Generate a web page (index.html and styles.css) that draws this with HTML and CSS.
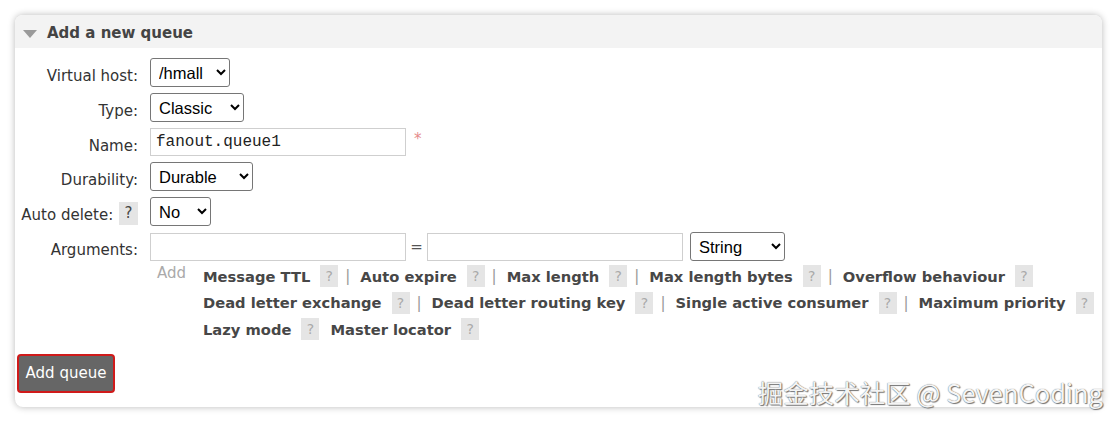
FILE: index.html
```html
<!DOCTYPE html>
<html lang="en">
<head>
    <meta charset="UTF-8">
    <meta name="viewport" content="width=device-width, initial-scale=1.0">
    <title>Add a new queue</title>
    <link rel="stylesheet" href="styles.css">
</head>
<body>
    <div class="section">
        <div class="section-head">
            <span class="arrow"></span>
            <h2>Add a new queue</h2>
        </div>
        <form class="queue-form" onsubmit="return false">
            <div class="form-grid">
                <label class="lbl">Virtual host:</label>
                <div class="ctl">
                    <select class="sel sel-vhost"><option>/hmall</option></select>
                </div>

                <label class="lbl">Type:</label>
                <div class="ctl">
                    <select class="sel sel-type"><option>Classic</option><option>Quorum</option></select>
                </div>

                <label class="lbl">Name:</label>
                <div class="ctl">
                    <input type="text" class="txt mono" value="fanout.queue1">
                    <span class="req">*</span>
                </div>

                <label class="lbl">Durability:</label>
                <div class="ctl">
                    <select class="sel sel-dur"><option>Durable</option><option>Transient</option></select>
                </div>

                <label class="lbl">Auto delete: <span class="help dark">?</span></label>
                <div class="ctl">
                    <select class="sel sel-auto"><option>No</option><option>Yes</option></select>
                </div>

                <label class="lbl">Arguments:</label>
                <div class="ctl args">
                    <div class="args-row">
                        <input type="text" class="txt">
                        <span class="eq">=</span>
                        <input type="text" class="txt">
                        <select class="sel sel-str"><option>String</option><option>Number</option><option>List</option></select>
                    </div>
                    <div class="add-row">
                        <span class="add">Add</span>
                        <div class="opts">
                            <div class="opt-line">
                                <span class="opt">Message TTL</span><span class="help">?</span><span class="sep">|</span>
                                <span class="opt">Auto expire</span><span class="help">?</span><span class="sep">|</span>
                                <span class="opt">Max length</span><span class="help">?</span><span class="sep">|</span>
                                <span class="opt">Max length bytes</span><span class="help">?</span><span class="sep">|</span>
                                <span class="opt">Overflow behaviour</span><span class="help">?</span>
                            </div>
                            <div class="opt-line">
                                <span class="opt">Dead letter exchange</span><span class="help">?</span><span class="sep">|</span>
                                <span class="opt">Dead letter routing key</span><span class="help">?</span><span class="sep">|</span>
                                <span class="opt">Single active consumer</span><span class="help">?</span><span class="sep">|</span>
                                <span class="opt">Maximum priority</span><span class="help">?</span>
                            </div>
                            <div class="opt-line">
                                <span class="opt">Lazy mode</span><span class="help gap">?</span>
                                <span class="opt">Master locator</span><span class="help">?</span>
                            </div>
                        </div>
                    </div>
                </div>
            </div>
            <div class="actions">
                <button class="btn" type="submit">Add queue</button>
            </div>
        </form>
    </div>
    <div class="watermark">掘金技术社区 @ SevenCoding</div>
</body>
</html>
```

FILE: styles.css
```css
*{
    margin: 0;
    padding: 0;
    box-sizing: border-box;
}
body{
    background: #fff;
    font-family: "DejaVu Sans", Verdana, sans-serif;
    font-size: 15px;
    color: #333;
    padding: 15px;
    position: relative;
    height: 424px;
    overflow: hidden;
}
.section{
    background: #fff;
    border-radius: 8px;
    box-shadow: 0 0 7px rgba(0, 0, 0, 0.28);
    height: 392px;
    overflow: hidden;
}
.section-head{
    height: 33px;
    background: #f3f3f3;
    display: flex;
    align-items: center;
    padding-left: 8px;
    padding-top: 3px;
}
.arrow{
    width: 0;
    height: 0;
    border-left: 7px solid transparent;
    border-right: 7px solid transparent;
    border-top: 8px solid #9a9a9a;
    margin-right: 10px;
    margin-top: 1px;
}
.section-head h2{
    font-size: 15px;
    font-weight: bold;
    color: #444;
}
.queue-form{
    padding-top: 10px;
}
.form-grid{
    display: grid;
    grid-template-columns: 135px 1fr;
    row-gap: 6px;
}
.lbl{
    text-align: right;
    padding-right: 12px;
    padding-top: 9px;
    color: #333;
    white-space: nowrap;
}
.ctl{
    display: flex;
    align-items: flex-start;
}
.sel{
    font-family: "Liberation Sans", Arial, sans-serif;
    font-size: 16.5px;
    color: #000;
    height: 29px;
    border: 1px solid #767676;
    border-radius: 3px;
    background: #fff;
    padding: 0 4px;
}
.sel-vhost{ width: 80px; }
.sel-type{ width: 94px; }
.sel-dur{ width: 103px; }
.sel-auto{ width: 61px; }
.sel-str{ width: 95px; margin-left: 7px; }
.txt{
    width: 256px;
    height: 28px;
    border: 1px solid #cfcfcf;
    font-family: "Liberation Sans", Arial, sans-serif;
    font-size: 16px;
    padding: 0 5px;
    outline: none;
}
.txt.mono{
    font-family: "Liberation Mono", "Courier New", monospace;
    font-size: 16px;
    color: #222;
}
.req{
    color: #e58a8a;
    margin-left: 8px;
    margin-top: 2px;
    font-size: 15px;
}
.help{
    display: inline-block;
    background: #e5e5e5;
    color: #aaa;
    width: 18px;
    height: 22px;
    line-height: 22px;
    text-align: center;
    font-weight: normal;
    font-size: 14px;
    vertical-align: middle;
}
.help.dark{
    color: #444;
    margin-left: 1px;
    margin-top: -4px;
    width: 19px;
    height: 23px;
    line-height: 23px;
    font-size: 15px;
}
.args{
    flex-direction: column;
}
.args-row{
    display: flex;
    align-items: center;
}
.eq{
    width: 21px;
    text-align: center;
    color: #555;
}
.add-row{
    display: flex;
    margin-top: 2px;
}
.add{
    color: #aaa;
    padding-left: 7px;
    width: 53px;
    padding-top: 1px;
}
.opts{
    display: flex;
    flex-direction: column;
}
.opt-line{
    height: 26.5px;
    display: flex;
    align-items: center;
    white-space: nowrap;
}
.opt{
    font-weight: bold;
    font-size: 14.7px;
    color: #474747;
    margin-right: 10px;
}
.sep{
    color: #999;
    margin: 0 10px 0 7px;
}
.help.gap{
    margin-right: 11px;
}
.actions{
    padding: 11px 0 0 2px;
}
.btn{
    font-family: "DejaVu Sans", Verdana, sans-serif;
    font-size: 15px;
    color: #fff;
    background: #666;
    border: 2px solid #d01a1a;
    border-radius: 4px;
    height: 39px;
    width: 98px;
    cursor: pointer;
}
.watermark{
    position: absolute;
    right: 14px;
    bottom: 14px;
    font-family: "Noto Sans CJK SC", "Noto Sans", sans-serif;
    font-size: 25.5px;
    color: #f4f4f4;
    text-shadow: 0 0 1px #555, 1px 1px 1px #777;
    white-space: nowrap;
}
```
